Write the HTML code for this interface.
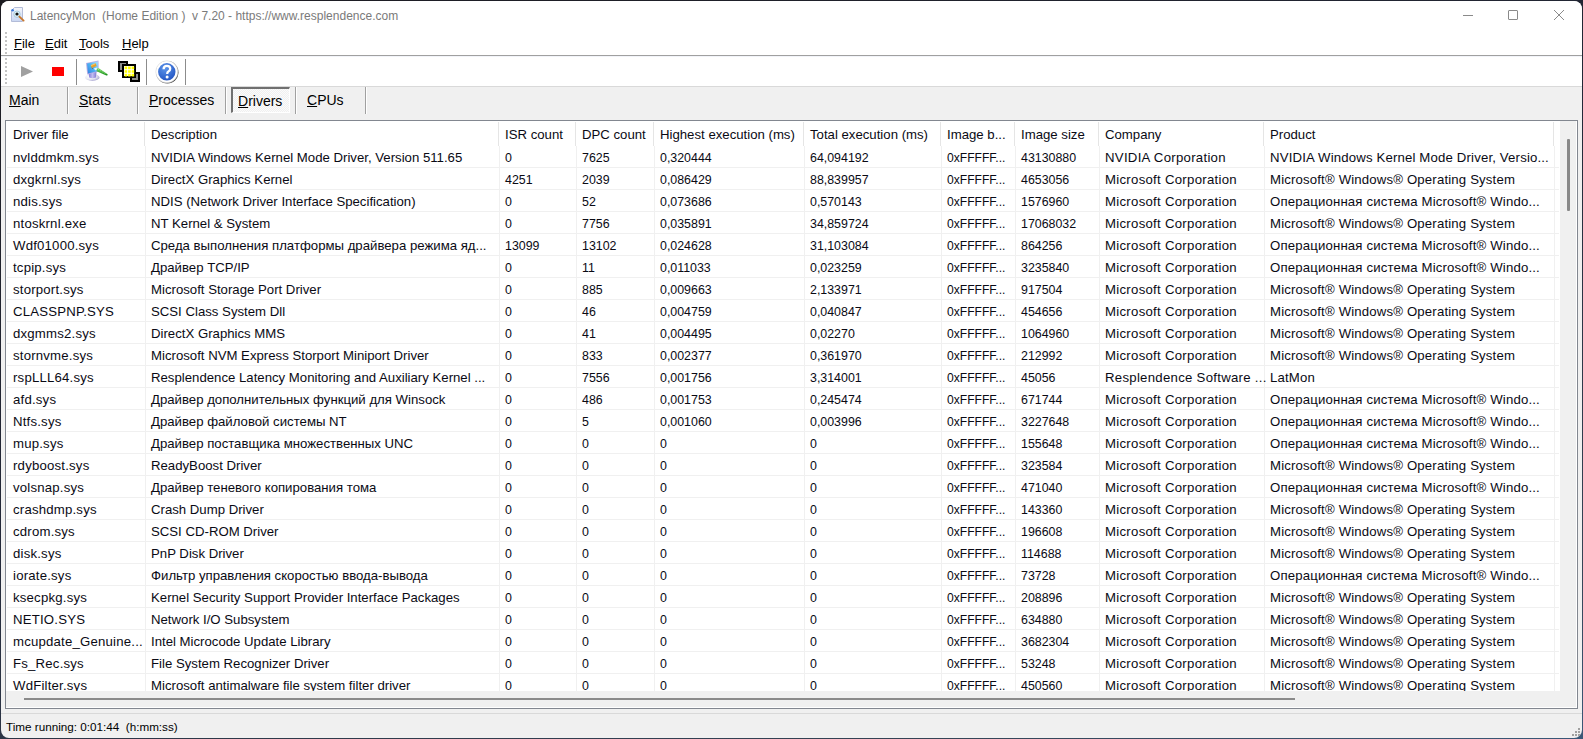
<!DOCTYPE html>
<html><head><meta charset="utf-8">
<style>
html,body{margin:0;padding:0;}
body{width:1583px;height:739px;overflow:hidden;background:linear-gradient(165deg,#1c1b20 0%,#232838 45%,#364456 85%,#3a5878 100%);position:relative;font-family:"Liberation Sans",sans-serif;color:#000;}
.win{position:absolute;left:1px;top:1px;width:1581px;height:737px;border-radius:8px;overflow:hidden;background:#f0f0f0;}
.in{position:absolute;left:-1px;top:-1px;width:1583px;height:739px;}
.a{position:absolute;}
.t{position:absolute;white-space:nowrap;}
.u{text-decoration:underline;text-underline-offset:1px;}
.clip{position:absolute;left:6px;top:121px;width:1554px;height:570px;overflow:hidden;background:#fff;}
.c{position:absolute;white-space:nowrap;font-size:13.2px;line-height:16px;color:#0a0a14;}
</style></head><body>
<div class="win"><div class="in">

<div class="a" style="left:0;top:0;width:1583px;height:55px;background:#fff"></div>
<div class="t" style="left:30px;top:8px;font-size:12.0px;line-height:16px;color:#7a7a7a">LatencyMon&nbsp; (Home Edition )&nbsp; v 7.20 - https://www.resplendence.com</div>
<div class="a" style="left:1463px;top:15px;width:10px;height:1px;background:#8a8a8a"></div>
<div class="a" style="left:1508px;top:10px;width:8px;height:8px;border:1px solid #8a8a8a;border-radius:1px"></div>
<svg class="a" style="left:1553px;top:9px" width="12" height="12" viewBox="0 0 12 12"><path d="M1 1L11 11M11 1L1 11" stroke="#8a8a8a" stroke-width="1"/></svg>
<svg class="a" style="left:10px;top:6px" width="16" height="17" viewBox="0 0 16 17">
<defs><linearGradient id="doc" x1="0" y1="0" x2="0" y2="1"><stop offset="0" stop-color="#f4f6fb"/><stop offset="1" stop-color="#c9d6f2"/></linearGradient></defs>
<path d="M1.5 4.5 L4.5 1.5 L12.5 1.5 L12.5 15.5 L1.5 15.5 Z" fill="url(#doc)" stroke="#b3bcd8" stroke-width="1"/>
<circle cx="2.6" cy="4.3" r="1.3" fill="#3a78d8"/>
<circle cx="7" cy="8.2" r="3.2" fill="#dff4fb" stroke="#a9cbdc" stroke-width="1"/>
<circle cx="7" cy="8" r="1.6" fill="#111"/>
<path d="M9.4 10.6 L13.6 14.6" stroke="#c9782e" stroke-width="1.9" stroke-linecap="round"/>
</svg>
<div class="t" style="left:14px;top:36px;font-size:13.0px;line-height:16px;color:#000"><span class="u">F</span>ile</div>
<div class="t" style="left:45px;top:36px;font-size:13.0px;line-height:16px;color:#000"><span class="u">E</span>dit</div>
<div class="t" style="left:79px;top:36px;font-size:13.0px;line-height:16px;color:#000"><span class="u">T</span>ools</div>
<div class="t" style="left:122px;top:36px;font-size:13.0px;line-height:16px;color:#000"><span class="u">H</span>elp</div>
<div class="a" style="left:0;top:55px;width:1583px;height:1px;background:#a0a0a0"></div>
<div class="a" style="left:0;top:56px;width:1583px;height:30px;background:#fff"></div>
<div class="a" style="left:0;top:86px;width:1583px;height:1px;background:#d9d9d9"></div>
<div class="a" style="left:0;top:56px;width:1583px;height:1px;background:#f2f4f9"></div>
<div class="a" style="left:5px;top:32px;width:2px;height:2px;background:#c4c4c4"></div>
<div class="a" style="left:5px;top:36px;width:2px;height:2px;background:#c4c4c4"></div>
<div class="a" style="left:5px;top:40px;width:2px;height:2px;background:#c4c4c4"></div>
<div class="a" style="left:5px;top:44px;width:2px;height:2px;background:#c4c4c4"></div>
<div class="a" style="left:5px;top:48px;width:2px;height:2px;background:#c4c4c4"></div>
<div class="a" style="left:5px;top:52px;width:2px;height:2px;background:#c4c4c4"></div>
<div class="a" style="left:5px;top:58px;width:2px;height:2px;background:#c4c4c4"></div>
<div class="a" style="left:5px;top:62px;width:2px;height:2px;background:#c4c4c4"></div>
<div class="a" style="left:5px;top:66px;width:2px;height:2px;background:#c4c4c4"></div>
<div class="a" style="left:5px;top:70px;width:2px;height:2px;background:#c4c4c4"></div>
<div class="a" style="left:5px;top:74px;width:2px;height:2px;background:#c4c4c4"></div>
<div class="a" style="left:5px;top:78px;width:2px;height:2px;background:#c4c4c4"></div>
<div class="a" style="left:5px;top:82px;width:2px;height:2px;background:#c4c4c4"></div>
<svg class="a" style="left:20px;top:65px" width="14" height="13" viewBox="0 0 14 13"><path d="M1 1 L13 6.5 L1 12 Z" fill="#a0a0a0"/></svg>
<div class="a" style="left:52px;top:67px;width:12px;height:9px;background:#ff0000"></div>
<div class="a" style="left:76px;top:59px;width:1px;height:26px;background:#8c8c8c"></div>
<div class="a" style="left:146px;top:59px;width:1px;height:26px;background:#8c8c8c"></div>
<div class="a" style="left:185px;top:59px;width:1px;height:26px;background:#8c8c8c"></div>
<svg class="a" style="left:83px;top:58px" width="28" height="26" viewBox="0 0 28 26">
<defs>
<linearGradient id="scr" x1="1" y1="0" x2="0" y2="1"><stop offset="0" stop-color="#a8e4ff"/><stop offset="0.5" stop-color="#4eb2f2"/><stop offset="1" stop-color="#2f7fe0"/></linearGradient>
<linearGradient id="std" x1="0" y1="0" x2="1" y2="0"><stop offset="0" stop-color="#6a5fd0"/><stop offset="0.5" stop-color="#b9b3ef"/><stop offset="1" stop-color="#6d62cc"/></linearGradient>
<linearGradient id="pen" x1="0" y1="0" x2="0" y2="1"><stop offset="0" stop-color="#7ad86a"/><stop offset="1" stop-color="#118a11"/></linearGradient>
</defs>
<radialGradient id="bse" cx="0.35" cy="0.35" r="0.7"><stop offset="0" stop-color="#ffffff"/><stop offset="0.6" stop-color="#e9e9f2"/><stop offset="1" stop-color="#a9a6d2"/></radialGradient><ellipse cx="9.3" cy="19.4" rx="7.2" ry="3.5" fill="url(#bse)"/>
<path d="M5.5 14.5 L13.5 13.5 L13 19.5 Q9.5 21 6.2 19.5 Z" fill="url(#std)" opacity="0.85"/>
<path d="M3 4.9 L15.5 2.4 L15.8 13.6 L4.2 16.4 Z" fill="#b7aee6"/>
<path d="M4 5.6 L14.8 3.4 L14.9 13 L5 15.4 Z" fill="url(#scr)"/>
<path d="M7.6 7.2 L12.6 5.2 L13.6 8 L8.8 10 Z" fill="#e8a028"/>
<path d="M8 7.6 L12.4 5.8" stroke="#ffd070" stroke-width="0.8"/>
<path d="M8.8 10 L9.6 10.6" stroke="#8a4a10" stroke-width="1"/>
<path d="M11 10.2 L14.2 9.4 L15 12 L12 12.2 Z" fill="#e8f4ff"/>
<path d="M13.8 10.4 L15.8 10.2 L24.6 16.2 Q25 17.8 23.4 17.6 L13.6 13.2 Z" fill="url(#pen)"/>
<path d="M15 11.2 L23 16" stroke="#9ae88a" stroke-width="0.8" stroke-dasharray="1.2 1"/>
</svg>
<svg class="a" style="left:117px;top:60px" width="25" height="24" viewBox="0 0 25 24">
<rect x="2" y="2" width="8" height="9" fill="#8c8c8c" stroke="#000" stroke-width="2"/>
<rect x="14" y="13" width="8" height="8" fill="#8c8c8c" stroke="#000" stroke-width="2"/>
<rect x="6" y="5" width="12" height="12" fill="#fff" stroke="#000" stroke-width="2"/>
<path d="M7.6 6.6h2.6v2.6h-2.6zM11.1 6.6h2.6v2.6h-2.6zM14.6 6.6h2.6v2.6h-2.6zM7.6 10.2h2.6v2.6h-2.6zM11.1 10.2h2.6v2.6h-2.6zM14.6 10.2h2.6v2.6h-2.6zM7.6 13.8h2.6v2.6h-2.6zM11.1 13.8h2.6v2.6h-2.6zM14.6 13.8h2.6v2.6h-2.6z" fill="#ffff00"/>
</svg>
<svg class="a" style="left:154px;top:59px" width="26" height="26" viewBox="0 0 26 26">
<defs><radialGradient id="hb" cx="0.4" cy="0.3" r="0.8"><stop offset="0" stop-color="#5c95ea"/><stop offset="1" stop-color="#1f50c0"/></radialGradient></defs>
<circle cx="13.3" cy="13.3" r="11.2" fill="#4a4a4a"/>
<circle cx="12.8" cy="12.8" r="11" fill="#fff" stroke="#d8d8d8" stroke-width="0.6"/>
<circle cx="12.8" cy="12.8" r="8.7" fill="url(#hb)"/>
<path d="M9.6 10.2 Q9.6 6.8 12.9 6.8 Q16.2 6.8 16.2 9.8 Q16.2 11.6 14.4 12.6 Q13.2 13.3 13.2 15" stroke="#fff" stroke-width="2.3" fill="none"/>
<circle cx="13.1" cy="18.1" r="1.5" fill="#fff"/>
</svg>
<div class="a" style="left:67px;top:87px;width:1px;height:27px;background:#a0a0a0"></div>
<div class="a" style="left:68px;top:87px;width:1px;height:27px;background:#fff"></div>
<div class="a" style="left:137px;top:87px;width:1px;height:27px;background:#a0a0a0"></div>
<div class="a" style="left:138px;top:87px;width:1px;height:27px;background:#fff"></div>
<div class="a" style="left:225px;top:87px;width:1px;height:27px;background:#a0a0a0"></div>
<div class="a" style="left:226px;top:87px;width:1px;height:27px;background:#fff"></div>
<div class="a" style="left:295px;top:87px;width:1px;height:27px;background:#a0a0a0"></div>
<div class="a" style="left:296px;top:87px;width:1px;height:27px;background:#fff"></div>
<div class="a" style="left:365px;top:87px;width:1px;height:27px;background:#a0a0a0"></div>
<div class="a" style="left:366px;top:87px;width:1px;height:27px;background:#fff"></div>
<div class="a" style="left:231px;top:87px;width:59px;height:26px;box-sizing:border-box;border-top:2px solid #707070;border-left:2px solid #707070;border-right:1px solid #fff;border-bottom:1px solid #fff;background-color:#f4f4f4;background-image:repeating-conic-gradient(#f0f0f0 0 25%, #fbfbfb 0 50%);background-size:2px 2px"></div>
<div class="t" style="left:9px;top:92px;font-size:14.0px;line-height:16px;color:#000"><span class="u">M</span>ain</div>
<div class="t" style="left:79px;top:92px;font-size:14.0px;line-height:16px;color:#000"><span class="u">S</span>tats</div>
<div class="t" style="left:149px;top:92px;font-size:14.0px;line-height:16px;color:#000"><span class="u">P</span>rocesses</div>
<div class="t" style="left:238px;top:93px;font-size:14.0px;line-height:16px;color:#000"><span class="u">D</span>rivers</div>
<div class="t" style="left:307px;top:92px;font-size:14.0px;line-height:16px;color:#000"><span class="u">C</span>PUs</div>
<div class="a" style="left:5px;top:120px;width:1573px;height:589px;box-sizing:border-box;border:1px solid #828790;background:#f0f0f0"></div>
<div class="a" style="left:6px;top:121px;width:1571px;height:587px;box-sizing:border-box;border-right:1px solid #fff;border-bottom:1px solid #fff;"></div>
<div class="clip">
<div class="c" style="left:7px;top:6px">Driver file</div>
<div class="c" style="left:145px;top:6px">Description</div>
<div class="c" style="left:499px;top:6px">ISR count</div>
<div class="c" style="left:576px;top:6px">DPC count</div>
<div class="c" style="left:654px;top:6px">Highest execution (ms)</div>
<div class="c" style="left:804px;top:6px">Total execution (ms)</div>
<div class="c" style="left:941px;top:6px">Image b...</div>
<div class="c" style="left:1015px;top:6px">Image size</div>
<div class="c" style="left:1099px;top:6px">Company</div>
<div class="c" style="left:1264px;top:6px">Product</div>
<div class="a" style="left:138px;top:1px;width:1px;height:24px;background:#e5e5e5"></div>
<div class="a" style="left:492px;top:1px;width:1px;height:24px;background:#e5e5e5"></div>
<div class="a" style="left:569px;top:1px;width:1px;height:24px;background:#e5e5e5"></div>
<div class="a" style="left:647px;top:1px;width:1px;height:24px;background:#e5e5e5"></div>
<div class="a" style="left:797px;top:1px;width:1px;height:24px;background:#e5e5e5"></div>
<div class="a" style="left:934px;top:1px;width:1px;height:24px;background:#e5e5e5"></div>
<div class="a" style="left:1008px;top:1px;width:1px;height:24px;background:#e5e5e5"></div>
<div class="a" style="left:1092px;top:1px;width:1px;height:24px;background:#e5e5e5"></div>
<div class="a" style="left:1257px;top:1px;width:1px;height:24px;background:#e5e5e5"></div>
<div class="a" style="left:1547px;top:1px;width:1px;height:24px;background:#e5e5e5"></div>
<div class="a" style="left:139px;top:25px;width:1px;height:600px;background:#f0f0f0"></div>
<div class="a" style="left:493px;top:25px;width:1px;height:600px;background:#f0f0f0"></div>
<div class="a" style="left:570px;top:25px;width:1px;height:600px;background:#f0f0f0"></div>
<div class="a" style="left:648px;top:25px;width:1px;height:600px;background:#f0f0f0"></div>
<div class="a" style="left:798px;top:25px;width:1px;height:600px;background:#f0f0f0"></div>
<div class="a" style="left:935px;top:25px;width:1px;height:600px;background:#f0f0f0"></div>
<div class="a" style="left:1009px;top:25px;width:1px;height:600px;background:#f0f0f0"></div>
<div class="a" style="left:1093px;top:25px;width:1px;height:600px;background:#f0f0f0"></div>
<div class="a" style="left:1258px;top:25px;width:1px;height:600px;background:#f0f0f0"></div>
<div class="a" style="left:1548px;top:25px;width:1px;height:600px;background:#f0f0f0"></div>
<div class="a" style="left:1px;top:46px;width:1552px;height:1px;background:#f0f0f0"></div>
<div class="c" style="left:7px;top:29px;letter-spacing:0.2px">nvlddmkm.sys</div>
<div class="c" style="left:145px;top:29px">NVIDIA Windows Kernel Mode Driver, Version 511.65</div>
<div class="c" style="left:499px;top:29px;font-size:12.4px">0</div>
<div class="c" style="left:576px;top:29px;font-size:12.4px">7625</div>
<div class="c" style="left:654px;top:29px;font-size:12.4px">0,320444</div>
<div class="c" style="left:804px;top:29px;font-size:12.4px">64,094192</div>
<div class="c" style="left:941px;top:29px;font-size:12.1px">0xFFFFF...</div>
<div class="c" style="left:1015px;top:29px;font-size:12.4px">43130880</div>
<div class="c" style="left:1099px;top:29px;letter-spacing:0.28px">NVIDIA Corporation</div>
<div class="c" style="left:1264px;top:29px;letter-spacing:0.16px">NVIDIA Windows Kernel Mode Driver, Versio...</div>
<div class="a" style="left:1px;top:68px;width:1552px;height:1px;background:#f0f0f0"></div>
<div class="c" style="left:7px;top:51px;letter-spacing:0.2px">dxgkrnl.sys</div>
<div class="c" style="left:145px;top:51px">DirectX Graphics Kernel</div>
<div class="c" style="left:499px;top:51px;font-size:12.4px">4251</div>
<div class="c" style="left:576px;top:51px;font-size:12.4px">2039</div>
<div class="c" style="left:654px;top:51px;font-size:12.4px">0,086429</div>
<div class="c" style="left:804px;top:51px;font-size:12.4px">88,839957</div>
<div class="c" style="left:941px;top:51px;font-size:12.1px">0xFFFFF...</div>
<div class="c" style="left:1015px;top:51px;font-size:12.4px">4653056</div>
<div class="c" style="left:1099px;top:51px;letter-spacing:0.28px">Microsoft Corporation</div>
<div class="c" style="left:1264px;top:51px;letter-spacing:0.16px">Microsoft® Windows® Operating System</div>
<div class="a" style="left:1px;top:90px;width:1552px;height:1px;background:#f0f0f0"></div>
<div class="c" style="left:7px;top:73px;letter-spacing:0.2px">ndis.sys</div>
<div class="c" style="left:145px;top:73px">NDIS (Network Driver Interface Specification)</div>
<div class="c" style="left:499px;top:73px;font-size:12.4px">0</div>
<div class="c" style="left:576px;top:73px;font-size:12.4px">52</div>
<div class="c" style="left:654px;top:73px;font-size:12.4px">0,073686</div>
<div class="c" style="left:804px;top:73px;font-size:12.4px">0,570143</div>
<div class="c" style="left:941px;top:73px;font-size:12.1px">0xFFFFF...</div>
<div class="c" style="left:1015px;top:73px;font-size:12.4px">1576960</div>
<div class="c" style="left:1099px;top:73px;letter-spacing:0.28px">Microsoft Corporation</div>
<div class="c" style="left:1264px;top:73px;letter-spacing:0.16px">Операционная система Microsoft® Windo...</div>
<div class="a" style="left:1px;top:112px;width:1552px;height:1px;background:#f0f0f0"></div>
<div class="c" style="left:7px;top:95px;letter-spacing:0.2px">ntoskrnl.exe</div>
<div class="c" style="left:145px;top:95px">NT Kernel &amp; System</div>
<div class="c" style="left:499px;top:95px;font-size:12.4px">0</div>
<div class="c" style="left:576px;top:95px;font-size:12.4px">7756</div>
<div class="c" style="left:654px;top:95px;font-size:12.4px">0,035891</div>
<div class="c" style="left:804px;top:95px;font-size:12.4px">34,859724</div>
<div class="c" style="left:941px;top:95px;font-size:12.1px">0xFFFFF...</div>
<div class="c" style="left:1015px;top:95px;font-size:12.4px">17068032</div>
<div class="c" style="left:1099px;top:95px;letter-spacing:0.28px">Microsoft Corporation</div>
<div class="c" style="left:1264px;top:95px;letter-spacing:0.16px">Microsoft® Windows® Operating System</div>
<div class="a" style="left:1px;top:134px;width:1552px;height:1px;background:#f0f0f0"></div>
<div class="c" style="left:7px;top:117px;letter-spacing:0.2px">Wdf01000.sys</div>
<div class="c" style="left:145px;top:117px">Среда выполнения платформы драйвера режима яд...</div>
<div class="c" style="left:499px;top:117px;font-size:12.4px">13099</div>
<div class="c" style="left:576px;top:117px;font-size:12.4px">13102</div>
<div class="c" style="left:654px;top:117px;font-size:12.4px">0,024628</div>
<div class="c" style="left:804px;top:117px;font-size:12.4px">31,103084</div>
<div class="c" style="left:941px;top:117px;font-size:12.1px">0xFFFFF...</div>
<div class="c" style="left:1015px;top:117px;font-size:12.4px">864256</div>
<div class="c" style="left:1099px;top:117px;letter-spacing:0.28px">Microsoft Corporation</div>
<div class="c" style="left:1264px;top:117px;letter-spacing:0.16px">Операционная система Microsoft® Windo...</div>
<div class="a" style="left:1px;top:156px;width:1552px;height:1px;background:#f0f0f0"></div>
<div class="c" style="left:7px;top:139px;letter-spacing:0.2px">tcpip.sys</div>
<div class="c" style="left:145px;top:139px">Драйвер TCP/IP</div>
<div class="c" style="left:499px;top:139px;font-size:12.4px">0</div>
<div class="c" style="left:576px;top:139px;font-size:12.4px">11</div>
<div class="c" style="left:654px;top:139px;font-size:12.4px">0,011033</div>
<div class="c" style="left:804px;top:139px;font-size:12.4px">0,023259</div>
<div class="c" style="left:941px;top:139px;font-size:12.1px">0xFFFFF...</div>
<div class="c" style="left:1015px;top:139px;font-size:12.4px">3235840</div>
<div class="c" style="left:1099px;top:139px;letter-spacing:0.28px">Microsoft Corporation</div>
<div class="c" style="left:1264px;top:139px;letter-spacing:0.16px">Операционная система Microsoft® Windo...</div>
<div class="a" style="left:1px;top:178px;width:1552px;height:1px;background:#f0f0f0"></div>
<div class="c" style="left:7px;top:161px;letter-spacing:0.2px">storport.sys</div>
<div class="c" style="left:145px;top:161px">Microsoft Storage Port Driver</div>
<div class="c" style="left:499px;top:161px;font-size:12.4px">0</div>
<div class="c" style="left:576px;top:161px;font-size:12.4px">885</div>
<div class="c" style="left:654px;top:161px;font-size:12.4px">0,009663</div>
<div class="c" style="left:804px;top:161px;font-size:12.4px">2,133971</div>
<div class="c" style="left:941px;top:161px;font-size:12.1px">0xFFFFF...</div>
<div class="c" style="left:1015px;top:161px;font-size:12.4px">917504</div>
<div class="c" style="left:1099px;top:161px;letter-spacing:0.28px">Microsoft Corporation</div>
<div class="c" style="left:1264px;top:161px;letter-spacing:0.16px">Microsoft® Windows® Operating System</div>
<div class="a" style="left:1px;top:200px;width:1552px;height:1px;background:#f0f0f0"></div>
<div class="c" style="left:7px;top:183px;letter-spacing:0.2px">CLASSPNP.SYS</div>
<div class="c" style="left:145px;top:183px">SCSI Class System Dll</div>
<div class="c" style="left:499px;top:183px;font-size:12.4px">0</div>
<div class="c" style="left:576px;top:183px;font-size:12.4px">46</div>
<div class="c" style="left:654px;top:183px;font-size:12.4px">0,004759</div>
<div class="c" style="left:804px;top:183px;font-size:12.4px">0,040847</div>
<div class="c" style="left:941px;top:183px;font-size:12.1px">0xFFFFF...</div>
<div class="c" style="left:1015px;top:183px;font-size:12.4px">454656</div>
<div class="c" style="left:1099px;top:183px;letter-spacing:0.28px">Microsoft Corporation</div>
<div class="c" style="left:1264px;top:183px;letter-spacing:0.16px">Microsoft® Windows® Operating System</div>
<div class="a" style="left:1px;top:222px;width:1552px;height:1px;background:#f0f0f0"></div>
<div class="c" style="left:7px;top:205px;letter-spacing:0.2px">dxgmms2.sys</div>
<div class="c" style="left:145px;top:205px">DirectX Graphics MMS</div>
<div class="c" style="left:499px;top:205px;font-size:12.4px">0</div>
<div class="c" style="left:576px;top:205px;font-size:12.4px">41</div>
<div class="c" style="left:654px;top:205px;font-size:12.4px">0,004495</div>
<div class="c" style="left:804px;top:205px;font-size:12.4px">0,02270</div>
<div class="c" style="left:941px;top:205px;font-size:12.1px">0xFFFFF...</div>
<div class="c" style="left:1015px;top:205px;font-size:12.4px">1064960</div>
<div class="c" style="left:1099px;top:205px;letter-spacing:0.28px">Microsoft Corporation</div>
<div class="c" style="left:1264px;top:205px;letter-spacing:0.16px">Microsoft® Windows® Operating System</div>
<div class="a" style="left:1px;top:244px;width:1552px;height:1px;background:#f0f0f0"></div>
<div class="c" style="left:7px;top:227px;letter-spacing:0.2px">stornvme.sys</div>
<div class="c" style="left:145px;top:227px">Microsoft NVM Express Storport Miniport Driver</div>
<div class="c" style="left:499px;top:227px;font-size:12.4px">0</div>
<div class="c" style="left:576px;top:227px;font-size:12.4px">833</div>
<div class="c" style="left:654px;top:227px;font-size:12.4px">0,002377</div>
<div class="c" style="left:804px;top:227px;font-size:12.4px">0,361970</div>
<div class="c" style="left:941px;top:227px;font-size:12.1px">0xFFFFF...</div>
<div class="c" style="left:1015px;top:227px;font-size:12.4px">212992</div>
<div class="c" style="left:1099px;top:227px;letter-spacing:0.28px">Microsoft Corporation</div>
<div class="c" style="left:1264px;top:227px;letter-spacing:0.16px">Microsoft® Windows® Operating System</div>
<div class="a" style="left:1px;top:266px;width:1552px;height:1px;background:#f0f0f0"></div>
<div class="c" style="left:7px;top:249px;letter-spacing:0.2px">rspLLL64.sys</div>
<div class="c" style="left:145px;top:249px">Resplendence Latency Monitoring and Auxiliary Kernel ...</div>
<div class="c" style="left:499px;top:249px;font-size:12.4px">0</div>
<div class="c" style="left:576px;top:249px;font-size:12.4px">7556</div>
<div class="c" style="left:654px;top:249px;font-size:12.4px">0,001756</div>
<div class="c" style="left:804px;top:249px;font-size:12.4px">3,314001</div>
<div class="c" style="left:941px;top:249px;font-size:12.1px">0xFFFFF...</div>
<div class="c" style="left:1015px;top:249px;font-size:12.4px">45056</div>
<div class="c" style="left:1099px;top:249px;letter-spacing:0.28px">Resplendence Software ...</div>
<div class="c" style="left:1264px;top:249px;letter-spacing:0.16px">LatMon</div>
<div class="a" style="left:1px;top:288px;width:1552px;height:1px;background:#f0f0f0"></div>
<div class="c" style="left:7px;top:271px;letter-spacing:0.2px">afd.sys</div>
<div class="c" style="left:145px;top:271px">Драйвер дополнительных функций для Winsock</div>
<div class="c" style="left:499px;top:271px;font-size:12.4px">0</div>
<div class="c" style="left:576px;top:271px;font-size:12.4px">486</div>
<div class="c" style="left:654px;top:271px;font-size:12.4px">0,001753</div>
<div class="c" style="left:804px;top:271px;font-size:12.4px">0,245474</div>
<div class="c" style="left:941px;top:271px;font-size:12.1px">0xFFFFF...</div>
<div class="c" style="left:1015px;top:271px;font-size:12.4px">671744</div>
<div class="c" style="left:1099px;top:271px;letter-spacing:0.28px">Microsoft Corporation</div>
<div class="c" style="left:1264px;top:271px;letter-spacing:0.16px">Операционная система Microsoft® Windo...</div>
<div class="a" style="left:1px;top:310px;width:1552px;height:1px;background:#f0f0f0"></div>
<div class="c" style="left:7px;top:293px;letter-spacing:0.2px">Ntfs.sys</div>
<div class="c" style="left:145px;top:293px">Драйвер файловой системы NT</div>
<div class="c" style="left:499px;top:293px;font-size:12.4px">0</div>
<div class="c" style="left:576px;top:293px;font-size:12.4px">5</div>
<div class="c" style="left:654px;top:293px;font-size:12.4px">0,001060</div>
<div class="c" style="left:804px;top:293px;font-size:12.4px">0,003996</div>
<div class="c" style="left:941px;top:293px;font-size:12.1px">0xFFFFF...</div>
<div class="c" style="left:1015px;top:293px;font-size:12.4px">3227648</div>
<div class="c" style="left:1099px;top:293px;letter-spacing:0.28px">Microsoft Corporation</div>
<div class="c" style="left:1264px;top:293px;letter-spacing:0.16px">Операционная система Microsoft® Windo...</div>
<div class="a" style="left:1px;top:332px;width:1552px;height:1px;background:#f0f0f0"></div>
<div class="c" style="left:7px;top:315px;letter-spacing:0.2px">mup.sys</div>
<div class="c" style="left:145px;top:315px">Драйвер поставщика множественных UNC</div>
<div class="c" style="left:499px;top:315px;font-size:12.4px">0</div>
<div class="c" style="left:576px;top:315px;font-size:12.4px">0</div>
<div class="c" style="left:654px;top:315px;font-size:12.4px">0</div>
<div class="c" style="left:804px;top:315px;font-size:12.4px">0</div>
<div class="c" style="left:941px;top:315px;font-size:12.1px">0xFFFFF...</div>
<div class="c" style="left:1015px;top:315px;font-size:12.4px">155648</div>
<div class="c" style="left:1099px;top:315px;letter-spacing:0.28px">Microsoft Corporation</div>
<div class="c" style="left:1264px;top:315px;letter-spacing:0.16px">Операционная система Microsoft® Windo...</div>
<div class="a" style="left:1px;top:354px;width:1552px;height:1px;background:#f0f0f0"></div>
<div class="c" style="left:7px;top:337px;letter-spacing:0.2px">rdyboost.sys</div>
<div class="c" style="left:145px;top:337px">ReadyBoost Driver</div>
<div class="c" style="left:499px;top:337px;font-size:12.4px">0</div>
<div class="c" style="left:576px;top:337px;font-size:12.4px">0</div>
<div class="c" style="left:654px;top:337px;font-size:12.4px">0</div>
<div class="c" style="left:804px;top:337px;font-size:12.4px">0</div>
<div class="c" style="left:941px;top:337px;font-size:12.1px">0xFFFFF...</div>
<div class="c" style="left:1015px;top:337px;font-size:12.4px">323584</div>
<div class="c" style="left:1099px;top:337px;letter-spacing:0.28px">Microsoft Corporation</div>
<div class="c" style="left:1264px;top:337px;letter-spacing:0.16px">Microsoft® Windows® Operating System</div>
<div class="a" style="left:1px;top:376px;width:1552px;height:1px;background:#f0f0f0"></div>
<div class="c" style="left:7px;top:359px;letter-spacing:0.2px">volsnap.sys</div>
<div class="c" style="left:145px;top:359px">Драйвер теневого копирования тома</div>
<div class="c" style="left:499px;top:359px;font-size:12.4px">0</div>
<div class="c" style="left:576px;top:359px;font-size:12.4px">0</div>
<div class="c" style="left:654px;top:359px;font-size:12.4px">0</div>
<div class="c" style="left:804px;top:359px;font-size:12.4px">0</div>
<div class="c" style="left:941px;top:359px;font-size:12.1px">0xFFFFF...</div>
<div class="c" style="left:1015px;top:359px;font-size:12.4px">471040</div>
<div class="c" style="left:1099px;top:359px;letter-spacing:0.28px">Microsoft Corporation</div>
<div class="c" style="left:1264px;top:359px;letter-spacing:0.16px">Операционная система Microsoft® Windo...</div>
<div class="a" style="left:1px;top:398px;width:1552px;height:1px;background:#f0f0f0"></div>
<div class="c" style="left:7px;top:381px;letter-spacing:0.2px">crashdmp.sys</div>
<div class="c" style="left:145px;top:381px">Crash Dump Driver</div>
<div class="c" style="left:499px;top:381px;font-size:12.4px">0</div>
<div class="c" style="left:576px;top:381px;font-size:12.4px">0</div>
<div class="c" style="left:654px;top:381px;font-size:12.4px">0</div>
<div class="c" style="left:804px;top:381px;font-size:12.4px">0</div>
<div class="c" style="left:941px;top:381px;font-size:12.1px">0xFFFFF...</div>
<div class="c" style="left:1015px;top:381px;font-size:12.4px">143360</div>
<div class="c" style="left:1099px;top:381px;letter-spacing:0.28px">Microsoft Corporation</div>
<div class="c" style="left:1264px;top:381px;letter-spacing:0.16px">Microsoft® Windows® Operating System</div>
<div class="a" style="left:1px;top:420px;width:1552px;height:1px;background:#f0f0f0"></div>
<div class="c" style="left:7px;top:403px;letter-spacing:0.2px">cdrom.sys</div>
<div class="c" style="left:145px;top:403px">SCSI CD-ROM Driver</div>
<div class="c" style="left:499px;top:403px;font-size:12.4px">0</div>
<div class="c" style="left:576px;top:403px;font-size:12.4px">0</div>
<div class="c" style="left:654px;top:403px;font-size:12.4px">0</div>
<div class="c" style="left:804px;top:403px;font-size:12.4px">0</div>
<div class="c" style="left:941px;top:403px;font-size:12.1px">0xFFFFF...</div>
<div class="c" style="left:1015px;top:403px;font-size:12.4px">196608</div>
<div class="c" style="left:1099px;top:403px;letter-spacing:0.28px">Microsoft Corporation</div>
<div class="c" style="left:1264px;top:403px;letter-spacing:0.16px">Microsoft® Windows® Operating System</div>
<div class="a" style="left:1px;top:442px;width:1552px;height:1px;background:#f0f0f0"></div>
<div class="c" style="left:7px;top:425px;letter-spacing:0.2px">disk.sys</div>
<div class="c" style="left:145px;top:425px">PnP Disk Driver</div>
<div class="c" style="left:499px;top:425px;font-size:12.4px">0</div>
<div class="c" style="left:576px;top:425px;font-size:12.4px">0</div>
<div class="c" style="left:654px;top:425px;font-size:12.4px">0</div>
<div class="c" style="left:804px;top:425px;font-size:12.4px">0</div>
<div class="c" style="left:941px;top:425px;font-size:12.1px">0xFFFFF...</div>
<div class="c" style="left:1015px;top:425px;font-size:12.4px">114688</div>
<div class="c" style="left:1099px;top:425px;letter-spacing:0.28px">Microsoft Corporation</div>
<div class="c" style="left:1264px;top:425px;letter-spacing:0.16px">Microsoft® Windows® Operating System</div>
<div class="a" style="left:1px;top:464px;width:1552px;height:1px;background:#f0f0f0"></div>
<div class="c" style="left:7px;top:447px;letter-spacing:0.2px">iorate.sys</div>
<div class="c" style="left:145px;top:447px">Фильтр управления скоростью ввода-вывода</div>
<div class="c" style="left:499px;top:447px;font-size:12.4px">0</div>
<div class="c" style="left:576px;top:447px;font-size:12.4px">0</div>
<div class="c" style="left:654px;top:447px;font-size:12.4px">0</div>
<div class="c" style="left:804px;top:447px;font-size:12.4px">0</div>
<div class="c" style="left:941px;top:447px;font-size:12.1px">0xFFFFF...</div>
<div class="c" style="left:1015px;top:447px;font-size:12.4px">73728</div>
<div class="c" style="left:1099px;top:447px;letter-spacing:0.28px">Microsoft Corporation</div>
<div class="c" style="left:1264px;top:447px;letter-spacing:0.16px">Операционная система Microsoft® Windo...</div>
<div class="a" style="left:1px;top:486px;width:1552px;height:1px;background:#f0f0f0"></div>
<div class="c" style="left:7px;top:469px;letter-spacing:0.2px">ksecpkg.sys</div>
<div class="c" style="left:145px;top:469px">Kernel Security Support Provider Interface Packages</div>
<div class="c" style="left:499px;top:469px;font-size:12.4px">0</div>
<div class="c" style="left:576px;top:469px;font-size:12.4px">0</div>
<div class="c" style="left:654px;top:469px;font-size:12.4px">0</div>
<div class="c" style="left:804px;top:469px;font-size:12.4px">0</div>
<div class="c" style="left:941px;top:469px;font-size:12.1px">0xFFFFF...</div>
<div class="c" style="left:1015px;top:469px;font-size:12.4px">208896</div>
<div class="c" style="left:1099px;top:469px;letter-spacing:0.28px">Microsoft Corporation</div>
<div class="c" style="left:1264px;top:469px;letter-spacing:0.16px">Microsoft® Windows® Operating System</div>
<div class="a" style="left:1px;top:508px;width:1552px;height:1px;background:#f0f0f0"></div>
<div class="c" style="left:7px;top:491px;letter-spacing:0.2px">NETIO.SYS</div>
<div class="c" style="left:145px;top:491px">Network I/O Subsystem</div>
<div class="c" style="left:499px;top:491px;font-size:12.4px">0</div>
<div class="c" style="left:576px;top:491px;font-size:12.4px">0</div>
<div class="c" style="left:654px;top:491px;font-size:12.4px">0</div>
<div class="c" style="left:804px;top:491px;font-size:12.4px">0</div>
<div class="c" style="left:941px;top:491px;font-size:12.1px">0xFFFFF...</div>
<div class="c" style="left:1015px;top:491px;font-size:12.4px">634880</div>
<div class="c" style="left:1099px;top:491px;letter-spacing:0.28px">Microsoft Corporation</div>
<div class="c" style="left:1264px;top:491px;letter-spacing:0.16px">Microsoft® Windows® Operating System</div>
<div class="a" style="left:1px;top:530px;width:1552px;height:1px;background:#f0f0f0"></div>
<div class="c" style="left:7px;top:513px;letter-spacing:0.2px">mcupdate_Genuine...</div>
<div class="c" style="left:145px;top:513px">Intel Microcode Update Library</div>
<div class="c" style="left:499px;top:513px;font-size:12.4px">0</div>
<div class="c" style="left:576px;top:513px;font-size:12.4px">0</div>
<div class="c" style="left:654px;top:513px;font-size:12.4px">0</div>
<div class="c" style="left:804px;top:513px;font-size:12.4px">0</div>
<div class="c" style="left:941px;top:513px;font-size:12.1px">0xFFFFF...</div>
<div class="c" style="left:1015px;top:513px;font-size:12.4px">3682304</div>
<div class="c" style="left:1099px;top:513px;letter-spacing:0.28px">Microsoft Corporation</div>
<div class="c" style="left:1264px;top:513px;letter-spacing:0.16px">Microsoft® Windows® Operating System</div>
<div class="a" style="left:1px;top:552px;width:1552px;height:1px;background:#f0f0f0"></div>
<div class="c" style="left:7px;top:535px;letter-spacing:0.2px">Fs_Rec.sys</div>
<div class="c" style="left:145px;top:535px">File System Recognizer Driver</div>
<div class="c" style="left:499px;top:535px;font-size:12.4px">0</div>
<div class="c" style="left:576px;top:535px;font-size:12.4px">0</div>
<div class="c" style="left:654px;top:535px;font-size:12.4px">0</div>
<div class="c" style="left:804px;top:535px;font-size:12.4px">0</div>
<div class="c" style="left:941px;top:535px;font-size:12.1px">0xFFFFF...</div>
<div class="c" style="left:1015px;top:535px;font-size:12.4px">53248</div>
<div class="c" style="left:1099px;top:535px;letter-spacing:0.28px">Microsoft Corporation</div>
<div class="c" style="left:1264px;top:535px;letter-spacing:0.16px">Microsoft® Windows® Operating System</div>
<div class="a" style="left:1px;top:574px;width:1552px;height:1px;background:#f0f0f0"></div>
<div class="c" style="left:7px;top:557px;letter-spacing:0.2px">WdFilter.sys</div>
<div class="c" style="left:145px;top:557px">Microsoft antimalware file system filter driver</div>
<div class="c" style="left:499px;top:557px;font-size:12.4px">0</div>
<div class="c" style="left:576px;top:557px;font-size:12.4px">0</div>
<div class="c" style="left:654px;top:557px;font-size:12.4px">0</div>
<div class="c" style="left:804px;top:557px;font-size:12.4px">0</div>
<div class="c" style="left:941px;top:557px;font-size:12.1px">0xFFFFF...</div>
<div class="c" style="left:1015px;top:557px;font-size:12.4px">450560</div>
<div class="c" style="left:1099px;top:557px;letter-spacing:0.28px">Microsoft Corporation</div>
<div class="c" style="left:1264px;top:557px;letter-spacing:0.16px">Microsoft® Windows® Operating System</div>
</div>
<div class="a" style="left:1560px;top:122px;width:16px;height:569px;background:#f0f0f0"></div>
<div class="a" style="left:1567px;top:139px;width:3px;height:72px;background:#8a8a8a;border-radius:1px"></div>
<div class="a" style="left:6px;top:691px;width:1570px;height:16px;background:#f0f0f0"></div>
<div class="a" style="left:24px;top:698px;width:1271px;height:2px;background:#8a8a8a"></div>
<div class="a" style="left:0;top:713px;width:1583px;height:1px;background:#d9d9d9"></div>
<div class="t" style="left:6px;top:719px;font-size:11.7px;line-height:16px;color:#000">Time running: 0:01:44&nbsp; (h:mm:ss)</div>
<div class="a" style="left:1578px;top:728px;width:2px;height:2px;background:#a0a0a0"></div>
<div class="a" style="left:1575px;top:731px;width:2px;height:2px;background:#a0a0a0"></div>
<div class="a" style="left:1578px;top:731px;width:2px;height:2px;background:#a0a0a0"></div>
<div class="a" style="left:1572px;top:734px;width:2px;height:2px;background:#a0a0a0"></div>
<div class="a" style="left:1575px;top:734px;width:2px;height:2px;background:#a0a0a0"></div>
<div class="a" style="left:1578px;top:734px;width:2px;height:2px;background:#a0a0a0"></div>
</div></div></body></html>
